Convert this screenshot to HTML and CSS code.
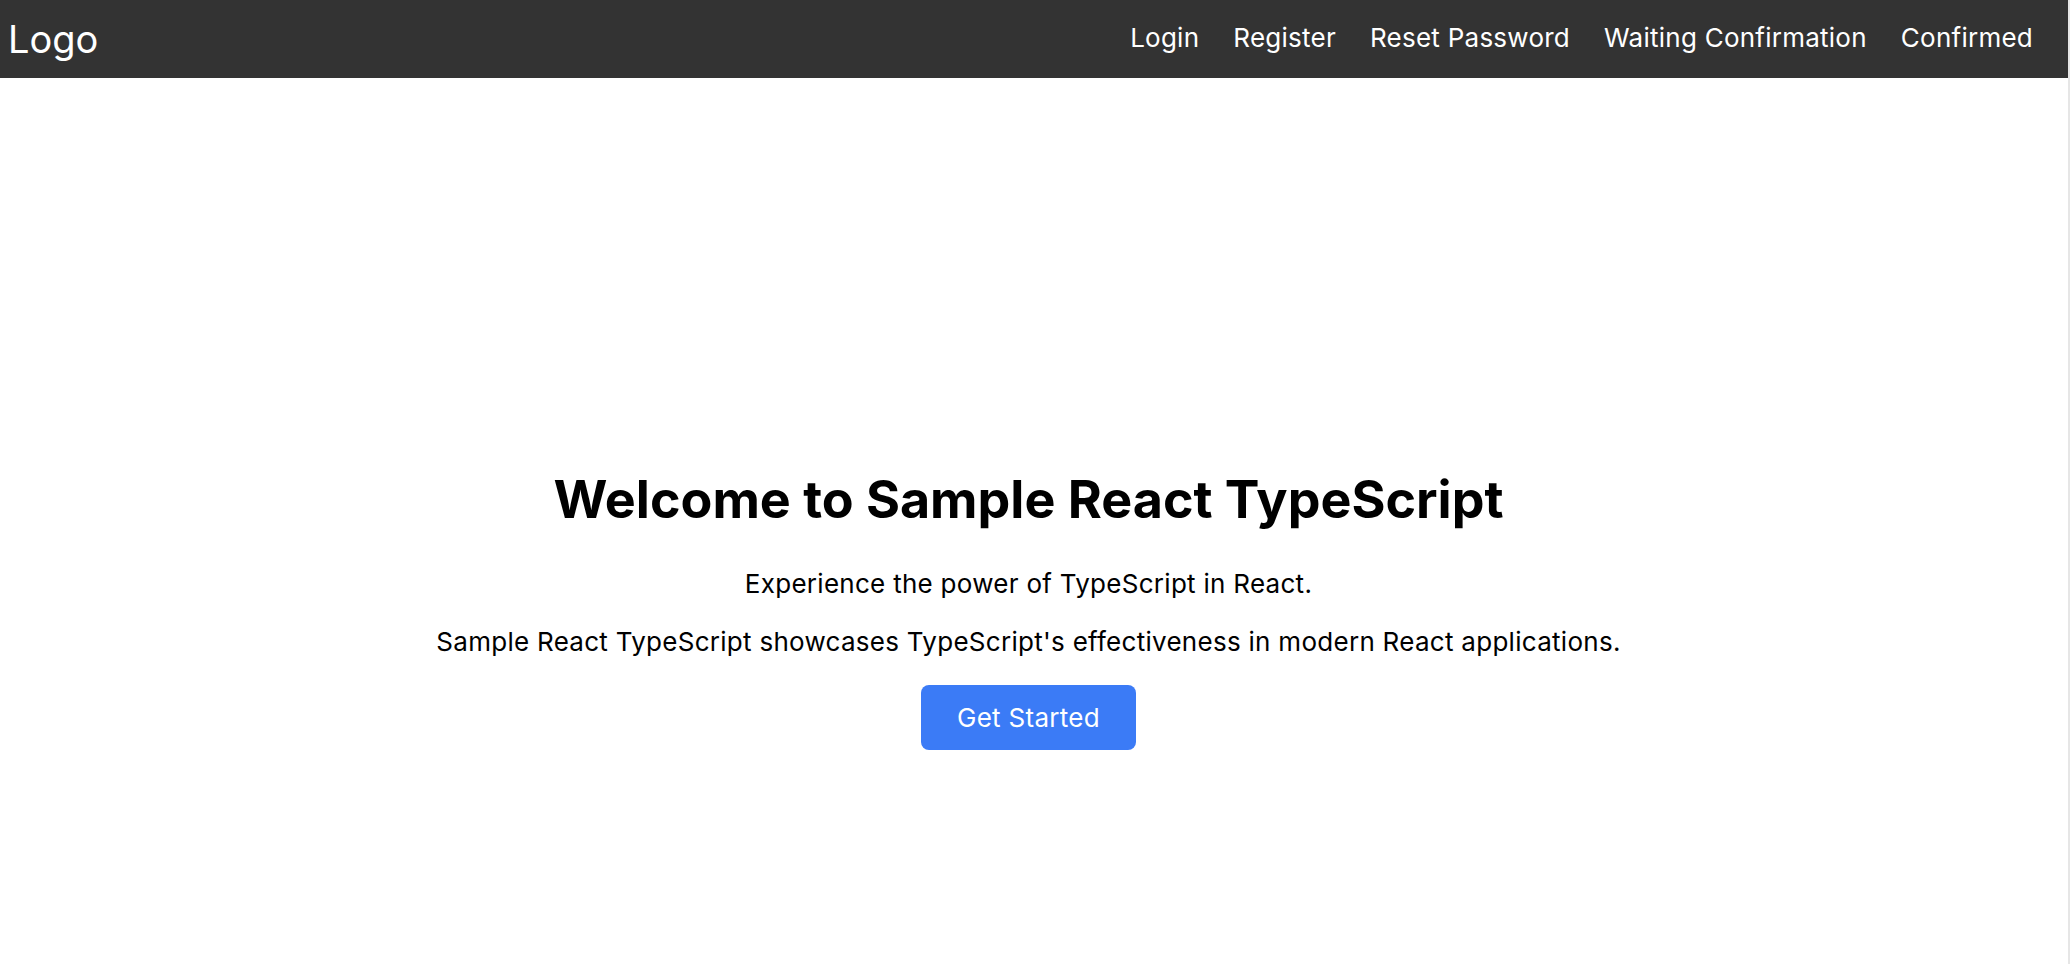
FILE: index.html
```html
<!DOCTYPE html>
<html lang="en">
<head>
<meta charset="utf-8">
<title>Sample React TypeScript</title>
<link rel="stylesheet" href="styles.css">
</head>
<body>
<div class="app">
  <header class="topbar">
    <div class="logo">Logo</div>
    <nav class="nav">
      <a class="nav-link" href="#">Login</a>
      <a class="nav-link" href="#">Register</a>
      <a class="nav-link" href="#">Reset Password</a>
      <a class="nav-link" href="#">Waiting Confirmation</a>
      <a class="nav-link" href="#">Confirmed</a>
    </nav>
  </header>
  <main class="hero">
    <h1 class="hero-title">Welcome to Sample React TypeScript</h1>
    <p class="hero-text first">Experience the power of TypeScript in React.</p>
    <p class="hero-text">Sample React TypeScript showcases TypeScript's effectiveness in modern React applications.</p>
    <button class="hero-button" type="button">Get Started</button>
  </main>
</div>
</body>
</html>
```

FILE: styles.css
```css
html {
  background: #e6e6e6;
  height: 100%;
}
body {
  margin: 0 2px 0 0;
  background: #ffffff;
  min-height: 100%;
  font-family: Inter, "Noto Sans", "Liberation Sans", sans-serif;
  color: #000;
}
.app {
  display: flex;
  flex-direction: column;
  min-height: 964px;
}
.topbar {
  height: 78px;
  background: #333333;
  display: flex;
  align-items: center;
  justify-content: space-between;
  padding: 0 35px 0 8px;
  box-sizing: border-box;
}
.logo {
  color: #fff;
  font-size: 38px;
  line-height: 1;
  padding-bottom: 1px;
}
.nav {
  display: flex;
  gap: 34px;
  padding-bottom: 2px;
}
.nav-link {
  color: #fff;
  text-decoration: none;
  font-size: 26px;
  letter-spacing: 0.25px;
  line-height: 1;
}
.hero {
  display: flex;
  flex-direction: column;
  align-items: center;
  padding: 390px 11px 0 0;
}
.hero-title {
  margin: 0;
  font-size: 52px;
  font-weight: 700;
  line-height: 63px;
}
.hero-text {
  margin: 19px 0 0;
  font-size: 26px;
  letter-spacing: 0.28px;
  line-height: 39px;
}
.hero-text.first {
  margin-top: 33px;
}
.hero-button {
  margin-top: 24px;
  background: #3b7bf6;
  color: #fff;
  border: none;
  border-radius: 8px;
  font-family: inherit;
  font-size: 26px;
  letter-spacing: 0.3px;
  line-height: 39px;
  padding: 13px 36px;
  cursor: pointer;
}
```
